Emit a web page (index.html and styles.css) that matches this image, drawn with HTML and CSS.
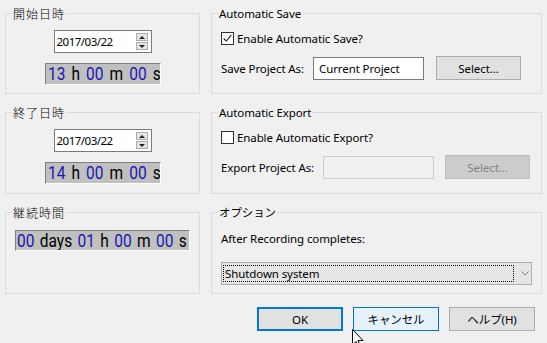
FILE: index.html
```html
<!DOCTYPE html>
<html lang="ja">
<head>
<meta charset="utf-8">
<link rel="stylesheet" href="styles.css">
</head>
<body>
<div class="dialog">
  <div class="grid">
    <div class="group">
      <span class="gtitle">開始日時</span>
      <div class="date-field first">
        <span class="date-text">2017/03/22</span>
        <span class="spin"><span class="sb up"></span><span class="sb down"></span></span>
      </div>
      <div class="lcd time"><span class="lcd-text"><span class="n">13</span> h <span class="n">00</span> m <span class="n">00</span> s</span></div>
    </div>

    <div class="group rgroup">
      <span class="gtitle">Automatic Save</span>
      <label class="check-row"><span class="cb checked"><svg viewBox="0 0 13 13" width="11" height="11"><path d="M2 6.5 L5 9.5 L11 2.5" fill="none" stroke="#222" stroke-width="1.3"/></svg></span>Enable Automatic Save?</label>
      <div class="field-row">
        <span class="flabel save">Save Project As:</span>
        <span class="textbox">Current Project</span>
        <span class="btn sel">Select...</span>
      </div>
    </div>

    <div class="group">
      <span class="gtitle">終了日時</span>
      <div class="date-field">
        <span class="date-text">2017/03/22</span>
        <span class="spin"><span class="sb up"></span><span class="sb down"></span></span>
      </div>
      <div class="lcd time"><span class="lcd-text"><span class="n">14</span> h <span class="n">00</span> m <span class="n">00</span> s</span></div>
    </div>

    <div class="group rgroup">
      <span class="gtitle">Automatic Export</span>
      <label class="check-row"><span class="cb"></span>Enable Automatic Export?</label>
      <div class="field-row">
        <span class="flabel export">Export Project As:</span>
        <span class="textbox disabled"></span>
        <span class="btn sel disabled">Select...</span>
      </div>
    </div>

    <div class="group">
      <span class="gtitle">継続時間</span>
      <div class="lcd duration"><span class="lcd-text"><span class="n">00</span> days <span class="n">01</span> h <span class="n">00</span> m <span class="n">00</span> s</span></div>
    </div>

    <div class="group rgroup">
      <span class="gtitle">オプション</span>
      <span class="plain">After Recording completes:</span>
      <div class="combo">
        <span class="focus">Shutdown system</span>
        <svg class="chev" viewBox="0 0 8 5" width="8" height="5"><path d="M0.5 0.5 L4 4 L7.5 0.5" fill="none" stroke="#777" stroke-width="1"/></svg>
      </div>
    </div>
  </div>

  <div class="buttons">
    <span class="btn dlg default">OK</span>
    <span class="btn dlg hover">キャンセル</span>
    <span class="btn dlg">ヘルプ(H)</span>
  </div>

  <svg class="cursor" viewBox="0 0 12 19" width="12" height="19"><path d="M0.5 0.5 L0.5 16 L4 12.5 L6.5 18 L8.5 17 L6 11.5 L11 11.5 Z" fill="#fff" stroke="#000" stroke-width="1"/></svg>
</div>
</body>
</html>
```
FILE: styles.css
```css
* { box-sizing: border-box; }
html, body { margin: 0; padding: 0; }
body {
  width: 547px;
  height: 343px;
  background: #f0f0f0;
  font-family: "Noto Sans", "Noto Sans CJK JP", sans-serif;
  font-size: 11.5px;
  letter-spacing: -0.1px;
  color: #000;
  overflow: hidden;
}
.dialog {
  position: relative;
  width: 547px;
  height: 343px;
  padding: 13px 0 0 5px;
}
.grid {
  display: grid;
  grid-template-columns: 195px 331px;
  grid-template-rows: 81px 82px 82px;
  column-gap: 11px;
  row-gap: 18px;
}
.group {
  border: 1px solid #dcdcdc;
  display: flex;
  flex-direction: column;
  align-items: center;
}
.rgroup { align-items: flex-start; padding-left: 9px; }
.gtitle {
  align-self: flex-start;
  margin-top: -8px;
  margin-left: 6px;
  padding: 0 1px;
  background: #f0f0f0;
  line-height: 15px;
  font-family: "Noto Sans CJK JP", "Noto Sans", sans-serif;
  font-size: 12px;
  font-weight: 300;
  letter-spacing: 1px;
}
.rgroup .gtitle {
  margin-left: -3px;
  font-family: "Noto Sans", "Noto Sans CJK JP", sans-serif;
  font-size: 11.5px;
  font-weight: 400;
  letter-spacing: -0.1px;
}

.date-field {
  margin-top: 9px;
  width: 98px;
  height: 23px;
  border: 1px solid #7a7a7a;
  background: #fff;
  display: flex;
  align-items: center;
  justify-content: space-between;
  padding: 0 3px 0 2px;
}
.date-text { font-size: 11.5px; letter-spacing: -0.5px; }
.spin { display: flex; flex-direction: column; gap: 1px; }
.sb {
  width: 12px;
  height: 8px;
  border: 1px solid #adadad;
  background: #e5e5e5;
  display: flex;
  align-items: center;
  justify-content: center;
}
.sb::after {
  content: "";
  border-left: 3px solid transparent;
  border-right: 3px solid transparent;
}
.sb.up::after { border-bottom: 3px solid #222; }
.sb.down::after { border-top: 3px solid #222; }

.lcd {
  background: #c0c0c0;
  border-top: 1px solid #7f7f7f;
  border-left: 1px solid #7f7f7f;
  border-bottom: 1px solid #fff;
  border-right: 1px solid #fff;
  white-space: nowrap;
  color: #000;
  overflow: hidden;
  display: flex;
  align-items: center;
}
.lcd-text {
  display: inline-block;
  font-family: Roboto, "Liberation Sans", sans-serif;
  font-weight: 400;
  font-size: 18px;
  line-height: 20px;
  letter-spacing: 0;
  word-spacing: 2.6px;
  transform: scaleX(0.86);
  transform-origin: 0 50%;
}
.lcd .n { color: #1818b0; }
.time { margin-top: 10px; width: 116px; height: 22px; padding-left: 2px; }
.duration { margin-top: 10px; width: 175px; height: 21px; align-self: flex-start; margin-left: 9px; padding-left: 1px; }
.duration .lcd-text { word-spacing: 1.8px; }

.check-row {
  margin-top: 10px;
  display: flex;
  align-items: center;
  gap: 3px;
  line-height: 15px;
}
.cb {
  width: 13px;
  height: 13px;
  border: 1px solid #333;
  background: #fff;
  display: flex;
  align-items: center;
  justify-content: center;
}
.field-row {
  margin-top: 10px;
  display: flex;
  align-items: center;
}
.flabel.save { width: 92px; }
.flabel.export { width: 102px; }
.textbox {
  width: 111px;
  height: 23px;
  border: 1px solid #7a7a7a;
  background: #fff;
  padding: 2px 5px;
  line-height: 17px;
}
.textbox.disabled { background: #f0f0f0; border-color: #cccccc; }
.btn {
  display: flex;
  align-items: center;
  justify-content: center;
  height: 24px;
  border: 1px solid #adadad;
  background: #e1e1e1;
}
.sel { width: 85px; margin-left: 12px; }
.sel.disabled { margin-left: 11px; background: #cccccc; border-color: #bfbfbf; color: #838383; }

.plain { margin-top: 11px; line-height: 15px; }
.combo {
  margin-top: 16px;
  width: 311px;
  height: 23px;
  border: 1px solid #adadad;
  background: #e5e5e5;
  display: flex;
  align-items: center;
  padding: 0 0 0 1px;
}
.focus {
  width: 291px;
  height: 17px;
  border: 1px dotted #000;
  line-height: 15px;
  padding-left: 1px;
}
.chev { margin-left: 7px; }

.buttons {
  margin-top: 13px;
  display: flex;
  justify-content: flex-end;
  gap: 10px;
  padding-right: 12px;
}
.dlg { width: 86px; height: 24px; }
.dlg.default { border: 2px solid #0078d7; }
.dlg.hover { border: 1px solid #0078d7; background: #e5f1fb; }
.cursor { position: absolute; left: 352px; top: 329px; }
```
